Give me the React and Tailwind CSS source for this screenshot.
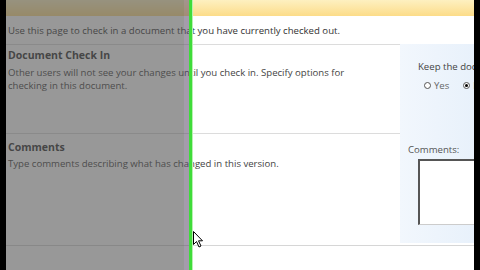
import React from "react";

export default function App() {
  const font = { fontFamily: '"Open Sans", "Liberation Sans", sans-serif' };
  return (
    <div className="relative w-[480px] h-[270px] overflow-hidden bg-white flex" style={font}>
      <div className="w-[6px] h-full bg-black shrink-0" />
      <div className="flex-1 flex flex-col min-w-0">
        <div className="h-[16px] shrink-0 bg-gradient-to-b from-[#fdf0c0] to-[#fcdc88]" />
        <div className="h-[28px] shrink-0 flex items-center pl-[2px] pt-[2px] text-[9.6px] text-[#333] whitespace-nowrap">
          Use this page to check in a document that you have currently checked out.
        </div>
        <div className="flex h-[199px] shrink-0">
          <div className="flex-1 flex flex-col">
            <div className="h-[90px] border-t border-b border-[#dcdcdc] pl-[2px] pt-[4px]">
              <div className="text-[10.5px] font-bold text-[#333] leading-[13px]">Document Check In</div>
              <div className="mt-[4px] text-[9.6px] text-[#444] leading-[13px] whitespace-nowrap">
                Other users will not see your changes until you check in. Specify options for
                <br />
                checking in this document.
              </div>
            </div>
            <div className="flex-1 pl-[2px] pt-[7px]">
              <div className="text-[10.5px] font-bold text-[#333] leading-[13px]">Comments</div>
              <div className="mt-[3px] text-[9.6px] text-[#444] leading-[13px] whitespace-nowrap">
                Type comments describing what has changed in this version.
              </div>
            </div>
          </div>
          <div className="w-[74px] shrink-0 bg-gradient-to-r from-[#f2f7fd] to-[#e8f1fb] overflow-hidden flex flex-col">
            <div className="h-[90px] pl-[18px] pt-[16px] text-[9.6px] text-[#444] whitespace-nowrap">
              <div className="leading-[13px]">Keep the document checked out</div>
              <div className="mt-[6px] flex items-center leading-[13px]">
                <span className="ml-[6px] shrink-0 w-[7px] h-[7px] rounded-full border border-[#555] bg-white" />
                <span className="ml-[3px] text-[#666]">Yes</span>
                <span className="ml-[14px] shrink-0 w-[7px] h-[7px] rounded-full border border-[#555] bg-white flex items-center justify-center">
                  <span className="w-[3px] h-[3px] rounded-full bg-black" />
                </span>
                <span className="ml-[3px] text-[#666]">No</span>
              </div>
            </div>
            <div className="pl-[8px] pt-[9px] text-[9.6px] text-[#555]">
              <div className="leading-[13px]">Comments:</div>
              <div className="mt-[3px] ml-[10px] w-[120px] h-[66px] bg-white border-t-[2px] border-l-[2px] border-[#555] border-b border-b-[#ccc]" />
            </div>
          </div>
        </div>
        <div className="mt-[2px] h-[1px] bg-[#d6d6d6] shrink-0" />
        <div className="flex-1" />
      </div>
      <div className="w-[6px] h-full bg-black shrink-0" />

      {/* gray overlay */}
      <div className="absolute left-[6px] top-0 w-[178px] h-full bg-[#545454]/60" />
      <div className="absolute left-[184px] top-0 w-[5px] h-full bg-[#5a4a66]/55" />
      <div className="absolute left-[189px] top-0 w-[3px] h-full bg-[#3fdc3a]" />
      <div className="absolute left-[192px] top-0 w-[1px] h-full bg-[#b8f2b0]" />

      {/* cursor */}
      <svg className="absolute left-[193px] top-[231px]" width="11" height="17" viewBox="0 0 11 17">
        <path d="M0.5 0.5 L0.5 13.5 L3.5 10.5 L6 16 L8 15 L5.5 9.8 L9.5 9.8 Z" fill="white" stroke="black" strokeWidth="1" strokeLinejoin="round" />
      </svg>
    </div>
  );
}
